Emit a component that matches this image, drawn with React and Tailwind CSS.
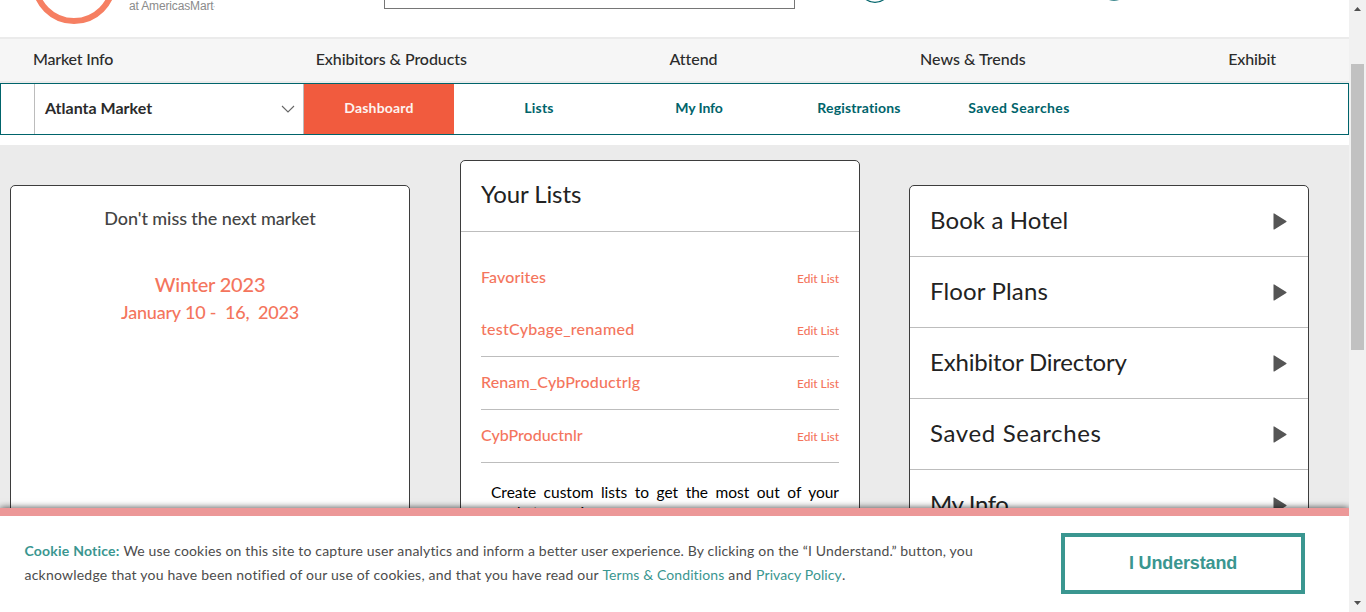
const NAV = [
  ["Market Info", "tracking-[-0.2px]"],
  ["Exhibitors & Products", "tracking-[-0.07px]"],
  ["Attend", "tracking-[-0.05px]"],
  ["News & Trends", "tracking-[0px]"],
  ["Exhibit", "tracking-[-0.15px]"],
];

const TABS = [
  ["Dashboard", "tracking-[0.2px] bg-[#f15b3e] text-[#fdf3f0]"],
  ["Lists", "tracking-[0.2px]"],
  ["My Info", "tracking-[-0.1px]"],
  ["Registrations", "tracking-[0.15px]"],
  ["Saved Searches", "tracking-[0.38px]"],
];

const LISTS = [
  ["Favorites", "tracking-[0.15px]", "h-[52px] pb-[1px]"],
  ["testCybage_renamed", "tracking-[0.28px]", "h-[53px] border-b border-[#bdbdbd]"],
  ["Renam_CybProductrlg", "tracking-[0.13px]", "h-[53px] border-b border-[#bdbdbd]"],
  ["CybProductnlr", "tracking-[0px]", "h-[53px] border-b border-[#bdbdbd]"],
];

const LINKS = [
  ["Book a Hotel", "tracking-[0.1px]"],
  ["Floor Plans", "tracking-[0.15px]"],
  ["Exhibitor Directory", "tracking-[-0.18px]"],
  ["Saved Searches", "tracking-[0.65px]"],
  ["My Info", "tracking-[-0.4px]"],
];

function Header() {
  return (
    <header className="flex h-[37px] shrink-0 items-start bg-white">
      <svg className="ml-[30px] h-[26px] w-[88px]" viewBox="0 0 88 26">
        <circle cx="44" cy="-18" r="39" fill="none" stroke="#f67f62" strokeWidth="6" />
      </svg>
      <div className="-mt-[2px] ml-[11px] w-[255px] font-['Liberation_Sans',sans-serif] text-[12px] leading-4 tracking-[-0.15px] text-[#8b8b8b]">
        at AmericasMart<span className="text-[6px]">'</span>
      </div>
      <div className="h-[9px] w-[411px] border border-t-0 border-[#767676]" />
      <svg className="ml-[65px] h-[4px] w-[30px]" viewBox="0 0 30 4">
        <circle cx="15" cy="-12.6" r="15" fill="none" stroke="#00646b" strokeWidth="1.3" />
      </svg>
      <svg className="ml-[209px] h-[4px] w-[30px]" viewBox="0 0 30 4">
        <circle cx="15" cy="-14.7" r="15.5" fill="#00646b" />
      </svg>
    </header>
  );
}

function MarketBar() {
  return (
    <div className="flex h-[52px] shrink-0 border border-[#00646b] bg-white">
      <div className="ml-[33px] flex w-[270px] items-center justify-between border-x border-[#bcbcbc] pr-[8px] pl-[10px] text-[16px] font-bold text-[#2b2b2b]">
        <span className="pb-[2px]">Atlanta Market</span>
        <svg className="h-[8px] w-[14px]" viewBox="0 0 14 8">
          <path d="M1 1l6 6 6-6" fill="none" stroke="#666" strokeWidth="1.1" />
        </svg>
      </div>
      <div className="flex gap-[10px]">
        {TABS.map(([label, cls]) => (
          <div key={label} className={`flex w-[150px] items-center justify-center pb-[3px] text-[14px] font-bold text-[#00646b] ${cls}`}>
            {label}
          </div>
        ))}
      </div>
    </div>
  );
}

function Cards() {
  return (
    <main className="mt-[10px] flex grow items-start bg-[#ebebeb]">
      <section className="mt-[40px] ml-[10px] h-[460px] w-[400px] rounded-[5px] border border-[#3d3d3d] bg-white pt-[18px] text-center text-[#f4755d]">
        <h2 className="text-[18px] leading-[28px] font-medium tracking-[-0.08px] text-[#444]">Don't miss the next market</h2>
        <p className="mt-[38px] text-[20px] leading-[28px] font-medium tracking-[-0.2px]">Winter 2023</p>
        <p className="text-[18px] leading-[28px] font-medium tracking-[-0.2px] whitespace-pre">January 10 -  16,  2023</p>
      </section>

      <section className="mt-[15px] ml-[50px] h-[480px] w-[400px] rounded-[5px] border border-[#3d3d3d] bg-white">
        <h2 className="h-[71px] border-b border-[#bdbdbd] pt-[15px] pl-[20px] text-[24px] leading-[36px] tracking-[-0.1px] text-[#222]">Your Lists</h2>
        <div className="mx-[20px] pt-[20px]">
          {LISTS.map(([name, tr, row]) => (
            <div key={name} className={`flex items-center justify-between text-[#f4755d] ${row}`}>
              <span className={`pb-[2px] text-[16px] font-medium ${tr}`}>{name}</span>
              <span className="pt-[2px] text-[12px] font-medium tracking-[-0.05px]">Edit List</span>
            </div>
          ))}
          <p className="mt-[19px] pl-[10px] text-justify text-[15.5px] leading-[20px] text-black">
            Create custom lists to get the most out of your market experience.
          </p>
        </div>
      </section>

      <section className="mt-[40px] ml-[49px] h-[460px] w-[400px] rounded-[5px] border border-[#3d3d3d] bg-white">
        {LINKS.map(([label, tr]) => (
          <div key={label} className="flex h-[71px] items-center justify-between border-b border-[#bdbdbd] pr-[21px] pl-[20px]">
            <span className={`pb-[2px] text-[24px] text-[#222] ${tr}`}>{label}</span>
            <svg className="h-[17px] w-[14px]" viewBox="0 0 14 17">
              <path d="M0.5 0.8Q0.5 0 1.3 0.5L13.3 8Q13.9 8.5 13.3 9L1.3 16.4Q0.5 16.9 0.5 16Z" fill="#555" />
            </svg>
          </div>
        ))}
      </section>
    </main>
  );
}

function CookieNotice() {
  return (
    <div className="absolute inset-x-0 bottom-0 flex h-[104px] items-start border-t-[8px] border-[#ec9898] bg-white shadow-[0_0_7px_rgba(0,0,0,0.75)]">
      <p className="mt-[23px] ml-[24.5px] w-[1036.5px] text-[14px] leading-[24px] tracking-[0.18px] text-[#4c4c4c]">
        <b className="tracking-[0.22px] text-[#3a9690]">Cookie Notice:</b>{" "}
        <span className="tracking-[0.175px]">
          We use cookies on this site to capture user analytics and inform a better user experience. By clicking on the “I Understand.” button, you
        </span>
        <br />
        <span className="tracking-[0.22px]">acknowledge that you have been notified of our use of cookies, and that you have read our </span>
        <span className="tracking-[0.1px] text-[#3a9690]">Terms &amp; Conditions</span>
        <span className="tracking-[0.4px]"> and </span>
        <span className="tracking-[0.1px] text-[#3a9690]">Privacy Policy</span>.
      </p>
      <button className="mt-[17px] h-[61px] w-[244px] border-4 border-[#3a9690] bg-white font-['Liberation_Sans',sans-serif] text-[18px] font-bold tracking-[-0.15px] text-[#3a9690]">
        I Understand
      </button>
    </div>
  );
}

function Scrollbar() {
  return (
    <div className="flex w-[17px] flex-col items-center justify-between bg-[#f1f1f1]">
      <svg className="mt-[7px] h-[4px] w-[7px]" viewBox="0 0 7 4">
        <path d="M0 4L3.5 0L7 4Z" fill="#505050" />
      </svg>
      <div className="mt-[53px] mb-auto h-[286px] w-[13px] bg-[#c1c1c1]" />
      <svg className="mb-[7px] h-[4px] w-[7px]" viewBox="0 0 7 4">
        <path d="M0 0L3.5 4L7 0Z" fill="#505050" />
      </svg>
    </div>
  );
}

export default function App() {
  return (
    <div className="flex h-[612px] w-[1366px] overflow-hidden bg-white font-['Lato',sans-serif]">
      <div className="relative flex h-[612px] w-[1349px] flex-col overflow-hidden">
        <Header />
        <nav className="flex h-[46px] shrink-0 items-center justify-between border-y-2 border-[#ebebeb] bg-[#f6f6f6] pr-[73px] pb-[2px] pl-[33px] text-[16px] font-medium text-[#2b2b2b]">
          {NAV.map(([label, tr]) => (
            <span key={label} className={tr}>{label}</span>
          ))}
        </nav>
        <MarketBar />
        <Cards />
        <CookieNotice />
      </div>
      <Scrollbar />
    </div>
  );
}
